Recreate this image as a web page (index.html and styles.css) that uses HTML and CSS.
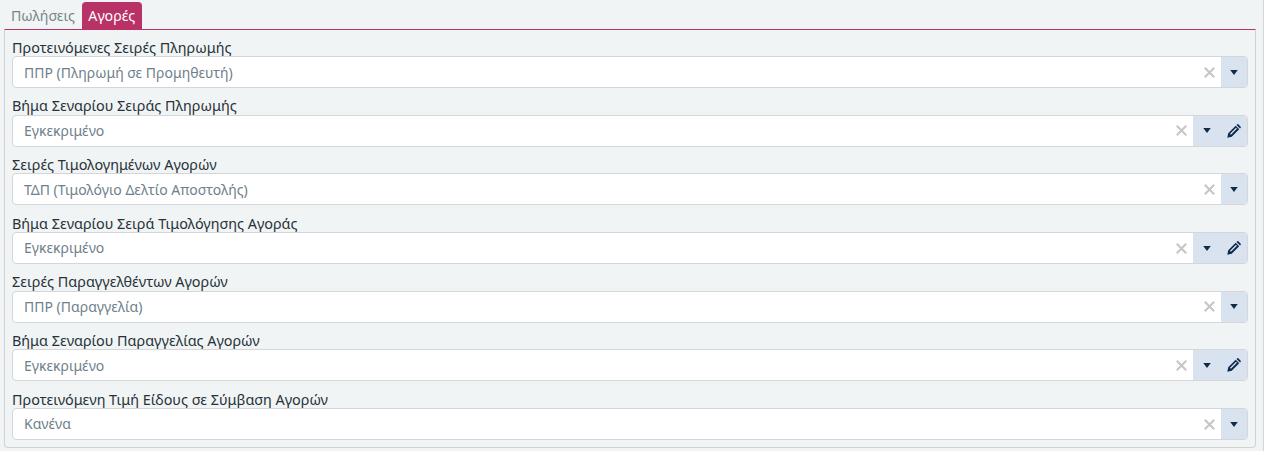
FILE: index.html
```html
<!DOCTYPE html>
<html lang="el">
<head>
<meta charset="utf-8">
<title>Αγορές</title>
<link rel="stylesheet" href="styles.css">
</head>
<body>
<svg class="defs" width="0" height="0" aria-hidden="true">
  <symbol id="i-x" viewBox="0 0 10 10"><path d="M.7.7l8.6 8.6M9.3.7L.7 9.3" fill="none" stroke="currentColor" stroke-width="1.9"/></symbol>
  <symbol id="i-caret" viewBox="0 0 9 6"><path d="M0 0h9L4.5 6z" fill="currentColor"/></symbol>
  <symbol id="i-pen" viewBox="0 0 14 14"><path d="M.3 13.7l.9-4.4 7.5-7.5 3.5 3.5-7.5 7.5zM3 9.8l6-6 .9.9-6 6zM9.5 1l.8-.7c.3-.3.7-.3 1 0l2.4 2.4c.3.3.3.7 0 1l-.7.8z" fill="currentColor" fill-rule="evenodd"/></symbol>
</svg>
<div class="page">
  <nav class="tabs">
    <span class="tab">Πωλήσεις</span>
    <span class="tab active">Αγορές</span>
  </nav>
  <section class="panel">
    <div class="field"><label class="label">Προτεινόμενες Σειρές Πληρωμής</label>
      <div class="select"><span class="value">ΠΠΡ (Πληρωμή σε Προμηθευτή)</span><svg class="clear"><use href="#i-x"/></svg><div class="addons"><span class="btn"><svg class="caret"><use href="#i-caret"/></svg></span></div></div></div>
    <div class="field"><label class="label">Βήμα Σεναρίου Σειράς Πληρωμής</label>
      <div class="select"><span class="value">Εγκεκριμένο</span><svg class="clear"><use href="#i-x"/></svg><div class="addons"><span class="btn"><svg class="caret"><use href="#i-caret"/></svg></span><span class="btn"><svg class="pen"><use href="#i-pen"/></svg></span></div></div></div>
    <div class="field"><label class="label">Σειρές Τιμολογημένων Αγορών</label>
      <div class="select"><span class="value">ΤΔΠ (Τιμολόγιο Δελτίο Αποστολής)</span><svg class="clear"><use href="#i-x"/></svg><div class="addons"><span class="btn"><svg class="caret"><use href="#i-caret"/></svg></span></div></div></div>
    <div class="field"><label class="label">Βήμα Σεναρίου Σειρά Τιμολόγησης Αγοράς</label>
      <div class="select"><span class="value">Εγκεκριμένο</span><svg class="clear"><use href="#i-x"/></svg><div class="addons"><span class="btn"><svg class="caret"><use href="#i-caret"/></svg></span><span class="btn"><svg class="pen"><use href="#i-pen"/></svg></span></div></div></div>
    <div class="field"><label class="label">Σειρές Παραγγελθέντων Αγορών</label>
      <div class="select"><span class="value">ΠΠΡ (Παραγγελία)</span><svg class="clear"><use href="#i-x"/></svg><div class="addons"><span class="btn"><svg class="caret"><use href="#i-caret"/></svg></span></div></div></div>
    <div class="field"><label class="label">Βήμα Σεναρίου Παραγγελίας Αγορών</label>
      <div class="select"><span class="value">Εγκεκριμένο</span><svg class="clear"><use href="#i-x"/></svg><div class="addons"><span class="btn"><svg class="caret"><use href="#i-caret"/></svg></span><span class="btn"><svg class="pen"><use href="#i-pen"/></svg></span></div></div></div>
    <div class="field"><label class="label">Προτεινόμενη Τιμή Είδους σε Σύμβαση Αγορών</label>
      <div class="select"><span class="value">Κανένα</span><svg class="clear"><use href="#i-x"/></svg><div class="addons"><span class="btn"><svg class="caret"><use href="#i-caret"/></svg></span></div></div></div>
  </section>
</div>
</body>
</html>
```
FILE: styles.css
```css
* { box-sizing: border-box; }
html, body { margin: 0; height: 100%; }
body {
  background: #fff;
  font-family: "Noto Sans", sans-serif;
  font-size: 14.4px;
  color: #263238;
  overflow: hidden;
}
.defs { position: absolute; }
.page {
  width: 1264px;
  height: 451px;
  padding: 2px 7px 0 4px;
  background: #f1f4f5;
  border-right: 1px solid #d4d6d7;
}
.tabs { display: flex; height: 27px; font-size: 14.2px; }
.tab {
  padding: 3px 7px 0;
  line-height: 21px;
  color: #78848a;
  border-radius: 4px 4px 0 0;
}
.tab.active { padding: 3px 6.5px 0; background: #b83268; color: #fff; }
.panel {
  height: 419px;
  padding: 6.66px 7px 0;
  border: 1px solid #d0d2d3;
  border-top: 1px solid #b83268;
  border-radius: 0 0 4px 4px;
}
.field { height: 58.67px; display: flex; flex-direction: column; }
.label { display: block; height: 19.5px; line-height: 21px; color: #263238; }
.select {
  display: flex;
  align-items: center;
  height: 32px;
  background: #fff;
  border: 1px solid #d4d6d7;
  border-radius: 4px;
  overflow: hidden;
}
.value { flex: 1; padding: 0.7px 0 0 11px; font-size: 14px; line-height: 20px; color: #6f7f8c; }
.clear { width: 11px; height: 11px; margin-right: 6px; color: #c4c6c7; }
.addons { display: flex; align-self: stretch; background: #d9e3f0; }
.btn { width: 26px; display: flex; align-items: center; justify-content: center; }
.btn:not(:last-child) { width: 28px; }
.caret { width: 8px; height: 5px; color: #122b45; }
.pen { width: 14px; height: 14px; color: #0f2a50; }
```
